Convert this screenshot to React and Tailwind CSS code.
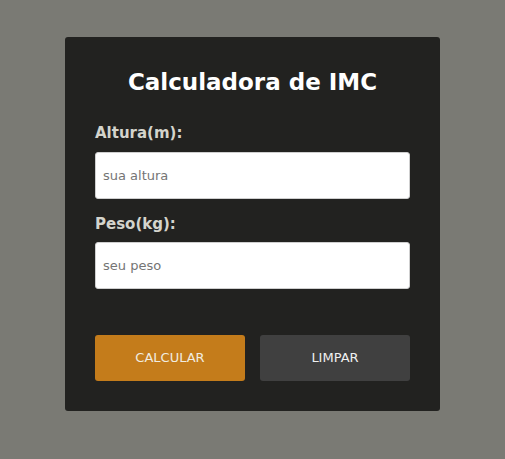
import React from "react";

function App() {
  return (
    <div
      className="min-h-screen bg-[#7a7a74] pt-[37px]"
      style={{ fontFamily: '"DejaVu Sans", Verdana, sans-serif' }}
    >
      <div className="mx-auto w-[375px] rounded-[3px] bg-[#222220] px-[30px] pt-[32px] pb-[30px]">
        {/* Title */}
        <h1 className="text-center text-[23px] leading-[27px] font-bold text-white">
          Calculadora de IMC
        </h1>

        {/* Altura */}
        <label className="mt-[28px] block text-[15px] leading-[18px] font-bold text-[#d4d4cc]">
          Altura(m):
        </label>
        <input
          type="text"
          placeholder="sua altura"
          className="mt-[10px] block h-[47px] w-full rounded-[3px] border border-[#cfcfcf] bg-white px-[7px] text-[13px] text-[#333] placeholder-[#757575] outline-none"
        />

        {/* Peso */}
        <label className="mt-[16px] block text-[15px] leading-[18px] font-bold text-[#d4d4cc]">
          Peso(kg):
        </label>
        <input
          type="text"
          placeholder="seu peso"
          className="mt-[9px] block h-[47px] w-full rounded-[3px] border border-[#cfcfcf] bg-white px-[7px] text-[13px] text-[#333] placeholder-[#757575] outline-none"
        />

        {/* Buttons */}
        <div className="mt-[46px] flex gap-[15px]">
          <button className="h-[46px] flex-1 rounded-[3px] bg-[#c47c1b] text-[13px] text-[#f0ece0]">
            CALCULAR
          </button>
          <button className="h-[46px] flex-1 rounded-[3px] bg-[#404040] text-[13px] text-[#f0f0f0]">
            LIMPAR
          </button>
        </div>
      </div>
    </div>
  );
}

export default App;
